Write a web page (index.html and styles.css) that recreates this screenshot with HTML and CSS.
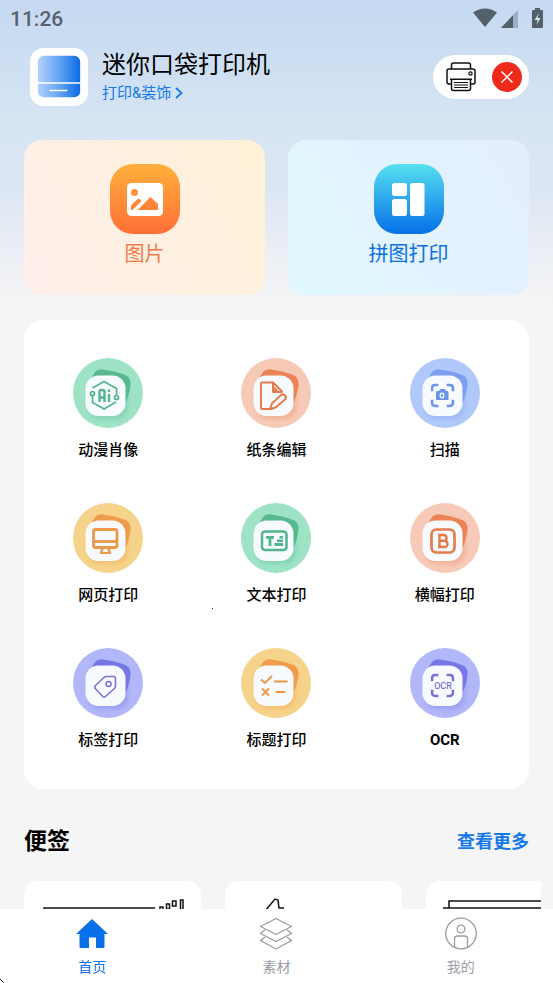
FILE: index.html
```html
<!DOCTYPE html>
<html lang="zh-CN">
<head>
<meta charset="utf-8">
<meta name="viewport" content="width=device-width, initial-scale=1">
<title>迷你口袋打印机</title>
<link rel="stylesheet" href="styles.css">
</head>
<body>
<svg class="defs" width="0" height="0" aria-hidden="true">
  <defs>
    <linearGradient id="logo" x1="0" x2="1"><stop offset="0" stop-color="#b4d2fb"/><stop offset=".55" stop-color="#5c9ff3"/><stop offset="1" stop-color="#0a6be6"/></linearGradient>
    <linearGradient id="orange" x1="0" y1="0" x2="0" y2="1"><stop offset="0" stop-color="#ffb03c"/><stop offset="1" stop-color="#ff6f36"/></linearGradient>
    <linearGradient id="blue" x1="0" y1="0" x2="0" y2="1"><stop offset="0" stop-color="#58e0f0"/><stop offset="1" stop-color="#0570e8"/></linearGradient>
    <filter id="shade" x="-30%" y="-30%" width="160%" height="160%"><feGaussianBlur stdDeviation="2"/></filter>
    <symbol id="base" viewBox="0 0 70 70">
      <circle class="disc" cx="35" cy="35" r="35"/>
      <path class="back" d="M18 23Q21 10 30 11.500Q42 13 51 16.500Q58.500 19 57.500 27Q56 38 52 46L48 50H20Z"/>
      <rect class="shadow" x="15" y="21" width="40" height="40" rx="12" filter="url(#shade)"/>
      <rect x="12.5" y="17.5" width="40" height="40.5" rx="13" fill="#f7faff"/>
    </symbol>
    <symbol id="frame" viewBox="0 0 24 24"><path d="M2 8V5Q2 2 5 2H8M16 2H19Q22 2 22 5V8M22 16V19Q22 22 19 22H16M8 22H5Q2 22 2 19V16" fill="none" stroke="currentColor" stroke-width="2.4"/></symbol>
  </defs>
</svg>

<main class="page">
  <div class="status">
    <time>11:26</time>
    <svg width="70" height="22" viewBox="0 0 70 22" aria-hidden="true">
      <path d="M0 4.500Q12-3.500 24 4.500L12 19Z" fill="#535f69"/>
      <path d="M45 2V20H28Z" fill="#9caec6"/><path d="M40 7.300V20H28Z" fill="#535f69"/>
      <path d="M60 2h2V0h5v2h2q1 0 1 1v16q0 1-1 1h-9q-1 0-1-1V3q0-1 1-1z" fill="#535f69"/>
      <path d="M66 5l-4.500 7h3l-1 5 4-7h-3z" fill="#d5e2f2"/>
    </svg>
  </div>

  <header class="header">
    <svg class="logo" viewBox="0 0 59 59" aria-hidden="true">
      <rect width="59" height="59" rx="14" fill="#fff"/>
      <rect x="8" y="8" width="43" height="42" rx="6" fill="url(#logo)"/>
      <path d="M8 35.500H51M20 43.200H38" stroke="#fff" stroke-width="1.500"/>
    </svg>
    <div class="brand">
      <h1>迷你口袋打印机</h1>
      <a href="#decor">打印&amp;装饰<svg width="8" height="12" viewBox="0 0 8 12" aria-hidden="true"><path d="M1 1L6.500 6 1 11" fill="none" stroke="currentColor" stroke-width="1.700"/></svg></a>
    </div>
    <button class="printer" type="button" aria-label="打印机未连接">
      <svg width="30" height="30" viewBox="0 0 30 30" fill="none" stroke="#111" stroke-width="1.500" aria-hidden="true">
        <path d="M5.500 7V3Q5.500 1 7.500 1H22.500Q24.500 1 24.500 3V7"/>
        <path d="M5.500 22H3Q1 22 1 20V9Q1 7 3 7H27Q29 7 29 9V20Q29 22 27 22H24.500M4 17.200H26"/>
        <path d="M5.500 17.200V26.500Q5.500 28.500 7.500 28.500H22.500Q24.500 28.500 24.500 26.500V17.200"/>
        <path d="M8 20.500H22M8 23H22M8 25.500H22" stroke-width="1.200"/><circle cx="24.500" cy="11.500" r="1.600" stroke-width="1.300"/>
      </svg>
      <svg width="30" height="30" viewBox="0 0 30 30" aria-hidden="true"><circle cx="15" cy="15" r="15" fill="#ee2a1b"/><path d="M9.500 9.500l11 11M20.500 9.500l-11 11" stroke="#fff" stroke-width="1.500"/></svg>
    </button>
  </header>

  <section class="features">
    <button class="feature photo" type="button">
      <svg width="70" height="70" viewBox="0 0 70 70" aria-hidden="true">
        <rect width="70" height="70" rx="23" fill="url(#orange)"/>
        <rect x="17" y="19" width="36" height="33" rx="4.500" fill="#fff"/>
        <circle cx="24.500" cy="28.500" r="3.500" fill="#ff9239"/>
        <path d="M21 46v-4.500l6.500-6.500q1-.7 2 0l2 2L22.500 46zM27.500 46L40.500 33l7.500 7v6z" fill="#ff8637"/>
      </svg>
      <span>图片</span>
    </button>
    <button class="feature puzzle" type="button">
      <svg width="70" height="70" viewBox="0 0 70 70" aria-hidden="true">
        <rect width="70" height="70" rx="23" fill="url(#blue)"/>
        <g fill="#fff"><rect x="18" y="19" width="15" height="13" rx="2.500"/><rect x="18" y="35" width="15" height="17" rx="2.500"/><rect x="36" y="19" width="14.500" height="33" rx="2.500"/></g>
      </svg>
      <span>拼图打印</span>
    </button>
  </section>

  <section class="tools">
    <button class="tool green" type="button">
      <svg viewBox="0 0 70 70" aria-hidden="true"><use href="#base"/>
        <g fill="none" stroke="currentColor" stroke-width="1.700">
          <path d="M19.500 30L31 23.500 43.500 30.500V37M43 44L31 51 19.500 44.500V38"/>
          <circle cx="19.500" cy="35.500" r="2"/><circle cx="43.500" cy="39.500" r="2"/>
          <path d="M26.500 44V34Q26.500 32 29 32Q31.500 32 31.500 34V44M26.500 39.500H31.500M36 36V44" stroke-width="2.400"/>
          <path d="M36 31.500V34" stroke-width="2.400"/>
        </g></svg>
      <span>动漫肖像</span>
    </button>
    <button class="tool coral" type="button">
      <svg viewBox="0 0 70 70" aria-hidden="true"><use href="#base"/>
        <g fill="none" stroke="currentColor" stroke-width="2" stroke-linejoin="round">
          <path d="M31.500 51H21Q20 51 20 50V25.500Q20 24.500 21 24.500H32L41.500 34M32 24.500V34H41.500M34 29.500V32H36.500"/>
          <path d="M40 37Q42 35.500 44 37.500T44 41.500L34.500 49.500 29 51 31 45.500Z"/>
        </g></svg>
      <span>纸条编辑</span>
    </button>
    <button class="tool azure" type="button">
      <svg viewBox="0 0 70 70" aria-hidden="true"><use href="#base"/>
        <use href="#frame" x="20" y="25" width="25" height="25"/>
        <path d="M27 33h2l1.500-2h4L36 33h1q1.500 0 1.500 1.500V42H26v-7.500q0-1.500 1-1.500z" fill="currentColor"/><ellipse cx="32" cy="37.500" rx="1.800" ry="2.300" fill="none" stroke="#f7faff" stroke-width="1.300"/></svg>
      <span>扫描</span>
    </button>
    <button class="tool amber" type="button">
      <svg viewBox="0 0 70 70" aria-hidden="true"><use href="#base"/>
        <g fill="none" stroke="currentColor" stroke-width="2.800"><rect x="20.500" y="26.500" width="23.500" height="18" rx="2"/><path d="M20.500 38.500H44"/><path d="M30 45L28 49.500M35 45L37 49.500M27 50H38" stroke-width="2.200"/></g></svg>
      <span>网页打印</span>
    </button>
    <button class="tool green" type="button">
      <svg viewBox="0 0 70 70" aria-hidden="true"><use href="#base"/>
        <rect x="21" y="28.500" width="24.500" height="18.500" rx="3" fill="none" stroke="currentColor" stroke-width="2.500"/>
        <path d="M25 33H33V35.800H30.400V43H27.600V35.800H25ZM38.500 33h3.500v2.500h-3.500zM36 36.500H42V39h-6zM33.500 40H42v3h-8.500z" fill="currentColor"/></svg>
      <span>文本打印</span>
    </button>
    <button class="tool coral" type="button">
      <svg viewBox="0 0 70 70" aria-hidden="true"><use href="#base"/>
        <rect x="21.500" y="26.500" width="23" height="23" rx="5" fill="none" stroke="currentColor" stroke-width="2.700"/>
        <path d="M29.500 32V44M28 32H33.500Q36.500 32 36.500 35T33.500 37.800H29.500M33.500 37.800Q37.500 37.800 37.500 41T33.500 44H28" fill="none" stroke="currentColor" stroke-width="2.400"/></svg>
      <span>横幅打印</span>
    </button>
    <button class="tool violet" type="button">
      <svg viewBox="0 0 70 70" aria-hidden="true"><use href="#base"/>
        <g fill="none" stroke="currentColor" stroke-width="1.500" stroke-linejoin="round"><path d="M22.500 37.500L31 29.500Q32 28.500 33.500 28.500H40.500Q42.500 28.500 42.500 30.500V38Q42.500 39.500 41.500 40.500L32.500 48.500Q31 49.800 29.500 48.300L22.500 40.800Q21 39 22.500 37.500Z"/><circle cx="35.500" cy="36" r="2.500"/></g></svg>
      <span>标签打印</span>
    </button>
    <button class="tool amber" type="button">
      <svg viewBox="0 0 70 70" aria-hidden="true"><use href="#base"/>
        <g fill="none" stroke="currentColor" stroke-width="2"><path d="M20 31.500L24 35 31 28M33 33.500H46.500M21 40.500L28 47.500M28 40.500L21 47.500M34.500 44H44.500"/></g></svg>
      <span>标题打印</span>
    </button>
    <button class="tool violet strong" type="button">
      <svg viewBox="0 0 70 70" aria-hidden="true"><use href="#base"/>
        <use href="#frame" x="20" y="25" width="25" height="25"/>
        <text x="33" y="41" text-anchor="middle" class="ocr">OCR</text></svg>
      <span>OCR</span>
    </button>
    <i class="speck"></i>
  </section>

  <section class="notes">
    <div class="notes-head"><h2>便签</h2><a href="#more">查看更多</a></div>
    <div class="note-row">
      <a class="note" href="#note1" aria-label="便签一"><svg viewBox="0 0 177 100" fill="none" stroke="#111" stroke-width="1.500"><path d="M20 90V27H131M136 30V26H139V30M142.500 23H145.500V28H142.500ZM148.500 20H152V25H148.500ZM156.500 30V19H159V30"/></svg></a>
      <a class="note" href="#note2" aria-label="便签二"><svg viewBox="0 0 177 100" fill="none" stroke="#111" stroke-width="1.500"><path d="M40 30L50 18 53 19 54 27H59"/></svg></a>
      <a class="note" href="#note3" aria-label="便签三"><svg viewBox="0 0 177 100" fill="none" stroke="#111" stroke-width="1.500"><path d="M160 20H23V27M17 27H160"/></svg></a>
    </div>
  </section>
</main>

<nav class="tabs">
  <a class="active" href="#home"><svg viewBox="0 0 34 34" aria-hidden="true"><path d="M17 2L33 17H29.500V30Q29.500 31 28.500 31H21V20.500H14V31H5.500Q4.500 31 4.500 30V17H1Z" fill="currentColor"/></svg>首页</a>
  <a href="#assets"><svg viewBox="0 0 34 34" fill="none" stroke="currentColor" stroke-width="1.300" stroke-linejoin="round" aria-hidden="true"><path d="M17 1.500L32.500 9.500 17 17.500 1.500 9.500ZM6 13L1.500 16.500 17 24.500 32.500 16.500 28 13M6 20L1.500 23.500 17 32 32.500 23.500 28 20"/></svg>素材</a>
  <a href="#me"><svg viewBox="0 0 34 34" fill="none" stroke="currentColor" stroke-width="1.300" aria-hidden="true"><circle cx="17" cy="16.500" r="15.300"/><circle cx="17" cy="12" r="3.800"/><path d="M10.500 30.300V22Q10.500 19 13.500 19H20.500Q23.500 19 23.500 22V30.300"/></svg>我的</a>
  <svg class="pointer" width="4" height="5" viewBox="0 0 4 5" aria-hidden="true"><path d="M0 1L3.500 4.500" stroke="#111"/></svg>
</nav>
</body>
</html>
```
FILE: styles.css
```css
* { box-sizing: border-box; }
body {
  margin: 0;
  height: 100vh;
  display: flex;
  flex-direction: column;
  position: relative;
  overflow: hidden;
  background: #f5f5f5;
  color: #000;
  font-family: Roboto, "Noto Sans CJK SC", sans-serif;
}
button { border: 0; padding: 0; margin: 0; font: inherit; background: none; cursor: pointer; }
a { text-decoration: none; color: inherit; }
svg { display: block; flex: none; }
h1, h2 { margin: 0; }
.defs { position: absolute; }

.page {
  flex: 1;
  min-height: 0;
  overflow: hidden;
  padding: 0 24px;
  background: linear-gradient(#c5d9f1 0, #d6e4f3 120px, #dce7f4 190px, #e9edf4 240px, #f5f5f5 310px);
}
.status {
  height: 38px;
  margin: 0 -14px;
  display: flex;
  align-items: center;
  justify-content: space-between;
  font-size: 21px;
  font-weight: 500;
  color: #57636f;
}
.header {
  display: flex;
  align-items: center;
  padding: 10px 0 34px 6px;
}
.logo { width: 58px; height: 58px; }
.brand { flex: 1; margin-left: 14px; }
.brand h1 { font-size: 24px; line-height: 32px; font-weight: 400; }
.brand a {
  display: flex;
  align-items: center;
  gap: 4px;
  font-size: 15px;
  line-height: 24px;
  color: #1478ea;
}
.printer {
  display: flex;
  align-items: center;
  gap: 16px;
  height: 44px;
  padding: 0 7px 0 13px;
  border-radius: 22px;
  background: #fff;
}

.features { display: grid; grid-template-columns: 1fr 1fr; gap: 23px; }
.feature {
  display: flex;
  flex-direction: column;
  align-items: center;
  gap: 6px;
  padding: 24px 0 27px;
  border-radius: 18px;
  font-size: 20px;
  line-height: 28px;
}
.photo { background: linear-gradient(60deg, #ffeeeb, #fef0e1 50%, #fef1d6); color: #f07c48; }
.puzzle { background: linear-gradient(60deg, #e0f8fd, #e3f3fe 50%, #e3eefe); color: #0c6fdc; }

.tools {
  position: relative;
  display: grid;
  grid-template-columns: repeat(3, 1fr);
  row-gap: 41px;
  margin-top: 25px;
  padding: 38px 0 37px;
  border-radius: 20px;
  background: #fff;
}
.tool {
  display: flex;
  flex-direction: column;
  align-items: center;
  gap: 10px;
  font-size: 15px;
  line-height: 24px;
  font-weight: 500;
}
.tool svg { width: 70px; height: 70px; }
.strong { font-weight: 700; }
.disc { fill: var(--disc); }
.back { fill: var(--back); }
.shadow { fill: var(--back); opacity: .35; }
.green { --disc: #9ee3c6; --back: #58b98f; }
.coral { --disc: #f6cab7; --back: #ec8257; }
.azure { --disc: #b0c9fa; --back: #7c9ff3; }
.amber { --disc: #f6d38a; --back: #f09b4c; }
.violet { --disc: #b1b7f8; --back: #7776e6; }
.green svg { color: #52b58b; }
.coral svg { color: #e57b4d; }
.azure svg { color: #6b94e8; }
.amber svg { color: #ed974a; }
.violet svg { color: #7a70cf; }
.ocr { font-size: 9px; font-weight: 500; fill: currentColor; }
.speck { position: absolute; left: 188px; top: 288px; width: 1px; height: 1px; background: #702040; }

.notes-head {
  display: flex;
  align-items: center;
  justify-content: space-between;
  padding: 35px 0 21px;
}
.notes-head h2 { font-size: 23px; line-height: 36px; font-weight: 700; }
.notes-head a { font-size: 18px; line-height: 36px; font-weight: 700; color: #1478ea; }
.note-row { display: flex; gap: 24px; margin-right: -12px; overflow: hidden; }
.note { flex: none; width: 177px; border-radius: 14px; background: #fff; }

.tabs {
  display: grid;
  grid-template-columns: repeat(3, 1fr);
  padding: 8px 0 6px;
  background: #fff;
  font-size: 14px;
  line-height: 20px;
  color: #9a9ca6;
}
.tabs a { display: flex; flex-direction: column; align-items: center; gap: 6px; }
.tabs a svg { width: 34px; height: 34px; }
.tabs .active { color: #0a70ea; }
.pointer { position: absolute; left: 0; bottom: 0; }
```
